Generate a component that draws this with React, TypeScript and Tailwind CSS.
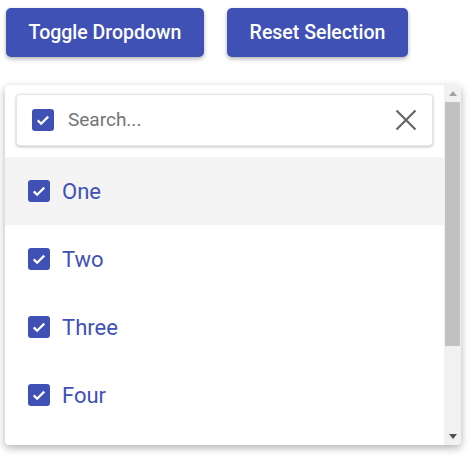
import React, { useState } from 'react';

const options = ['One', 'Two', 'Three', 'Four'];

const CheckBox: React.FC<{ checked: boolean }> = ({ checked }) => (
  <span
    className={`flex h-[22px] w-[22px] shrink-0 items-center justify-center rounded-[3px] ${
      checked ? 'bg-[#3f51b5]' : 'border-2 border-[#757575] bg-white'
    }`}
  >
    {checked && (
      <svg viewBox="0 0 24 24" className="h-[18px] w-[18px]" fill="none" stroke="white" strokeWidth={3}>
        <path d="M5 12.5l4.5 4.5L19 7.5" />
      </svg>
    )}
  </span>
);

const App: React.FC = () => {
  const [open, setOpen] = useState(true);
  const [selected, setSelected] = useState<string[]>(options);
  const [query, setQuery] = useState('');

  const toggle = (opt: string) =>
    setSelected((prev) => (prev.includes(opt) ? prev.filter((o) => o !== opt) : [...prev, opt]));

  const visible = options.filter((o) => o.toLowerCase().includes(query.toLowerCase()));

  return (
    <div className="min-h-screen bg-white font-['Roboto',sans-serif]">
      <div className="flex gap-[23px] pl-[6px] pt-[8px]">
        <button
          onClick={() => setOpen(!open)}
          className="h-[49px] w-[198px] rounded-[5px] bg-[#3f51b5] text-[19.5px] font-medium text-white shadow-[0_2px_4px_rgba(0,0,0,0.3)]"
        >
          Toggle Dropdown
        </button>
        <button
          onClick={() => setSelected(options)}
          className="h-[49px] w-[181px] rounded-[5px] bg-[#3f51b5] text-[19.5px] font-medium text-white shadow-[0_2px_4px_rgba(0,0,0,0.3)]"
        >
          Reset Selection
        </button>
      </div>

      {open && (
        <div className="ml-[5px] mt-[28px] flex h-[360px] w-[456px] rounded-[4px] bg-white shadow-[0_3px_8px_rgba(0,0,0,0.3)]">
          <div className="flex flex-1 flex-col overflow-hidden">
            {/* Search header */}
            <div className="shrink-0 px-[11px] pb-[11px] pt-[9px]">
              <div className="flex h-[52px] items-center rounded-[4px] border border-[#e6e6e6] bg-white pl-[15px] pr-[14px] shadow-[0_1px_3px_rgba(0,0,0,0.25)]">
                <CheckBox checked={selected.length === options.length} />
                <input
                  value={query}
                  onChange={(e) => setQuery(e.target.value)}
                  placeholder="Search..."
                  className="ml-[14px] flex-1 bg-transparent text-[19px] text-[#333] outline-none placeholder:text-[#757575]"
                />
                <button onClick={() => setQuery('')} className="flex h-[24px] w-[24px] items-center justify-center">
                  <svg viewBox="0 0 24 24" className="h-[24px] w-[24px]" fill="none" stroke="#666" strokeWidth={2.2}>
                    <path d="M2.5 2.5l19 19M21.5 2.5l-19 19" />
                  </svg>
                </button>
              </div>
            </div>

            {/* Options */}
            {visible.map((opt, i) => (
              <div
                key={opt}
                onClick={() => toggle(opt)}
                className={`flex h-[68px] shrink-0 cursor-pointer items-center gap-[12px] pl-[23px] ${
                  i === 0 ? 'bg-[#f4f4f4]' : 'bg-white'
                }`}
              >
                <CheckBox checked={selected.includes(opt)} />
                <span className="text-[22px] text-[#3f51b5]">{opt}</span>
              </div>
            ))}
          </div>

          {/* Scrollbar */}
          <div className="flex w-[17px] shrink-0 flex-col items-center rounded-r-[4px] bg-[#f1f1f1]">
            <div className="flex h-[17px] items-center justify-center">
              <svg viewBox="0 0 8 5" className="h-[5px] w-[8px]">
                <path d="M0 5L4 0l4 5z" fill="#a3a3a3" />
              </svg>
            </div>
            <div className="h-[244px] w-[15px] bg-[#c1c1c1]" />
            <div className="flex-1" />
            <div className="flex h-[17px] items-center justify-center">
              <svg viewBox="0 0 8 5" className="h-[5px] w-[8px]">
                <path d="M0 0h8L4 5z" fill="#505050" />
              </svg>
            </div>
          </div>
        </div>
      )}
    </div>
  );
};

export default App;
